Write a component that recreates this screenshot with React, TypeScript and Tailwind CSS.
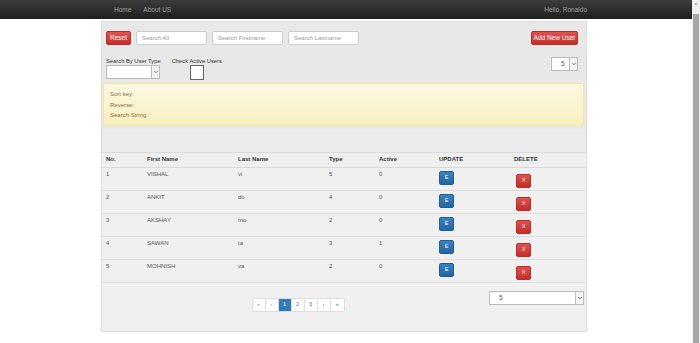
import { ChevronDown } from "lucide-react";

const users = [
  { no: 1, first: "VISHAL", last: "vi", type: 5, active: 0 },
  { no: 2, first: "ANKIT", last: "do", type: 4, active: 0 },
  { no: 3, first: "AKSHAY", last: "mo", type: 2, active: 0 },
  { no: 4, first: "SAWAN", last: "ta", type: 3, active: 1 },
  { no: 5, first: "MOHNISH", last: "va", type: 2, active: 0 },
];

const FakeSelect = ({ value, width }: { value: string; width: string }) => (
  <div className={`flex h-[14px] ${width} border border-[#bbb] bg-white`}>
    <span className="flex-1 pl-[9px] text-[6.5px] leading-[12px] text-[#555]">{value}</span>
    <span className="flex w-[8px] items-center justify-center border-l border-[#bbb] bg-[#f4f4f4]">
      <ChevronDown className="h-[6px] w-[6px] text-[#444]" strokeWidth={3} />
    </span>
  </div>
);

const App = () => {
  return (
    <div className="flex h-[343px] overflow-hidden bg-white font-['Liberation_Sans',Arial,sans-serif] text-[6.5px] text-[#333]">
      <div className="flex-1">
        {/* Navbar */}
        <div className="flex h-[19px] items-center bg-gradient-to-b from-[#3d3d3d] to-[#1f1f1f] pl-[114px] pr-[105px] text-[6.5px] text-[#a0a0a0]">
          <span>Home</span>
          <span className="ml-[12px]">About US</span>
          <span className="ml-auto">Hello, Ronaldo</span>
        </div>

        <div className="ml-[101px] mt-[2px] w-[486px] border border-[#dcdcdc] bg-[#f0f0f0]">
          {/* Search / filter area */}
          <div className="bg-[#e8e8e8] pb-[3px]">
            <div className="flex items-center px-[4px] pt-[9px]">
              <button className="h-[14px] w-[25px] rounded-[2px] border border-[#b92c28] bg-gradient-to-b from-[#e0504c] to-[#c22f2b] text-[6.5px] text-white">
                Reset
              </button>
              {["Search All", "Search Firstname", "Search Lastname"].map((p) => (
                <div
                  key={p}
                  className="ml-[5px] h-[14px] w-[71px] rounded-[2px] border border-[#ccc] bg-white pl-[5px] text-[6px] leading-[12px] text-[#999]"
                >
                  {p}
                </div>
              ))}
              <button className="ml-auto mr-[4px] h-[14px] w-[47px] rounded-[2px] border border-[#b92c28] bg-gradient-to-b from-[#e0504c] to-[#c22f2b] text-[6.5px] text-white">
                Add New User
              </button>
            </div>

            <div className="mt-[12px] flex px-[4px] text-[5.8px]">
              <div className="flex flex-col">
                <span className="h-[8px] leading-[8px]">Search By User Type</span>
                <FakeSelect value="" width="w-[54px]" />
              </div>
              <div className="ml-[11px] flex flex-col">
                <span className="h-[8px] leading-[8px]">Check Active Users</span>
                <div className="ml-[18px] h-[15px] w-[14px] border border-[#666] bg-white" />
              </div>
              <div className="ml-auto mr-[4px]">
                <FakeSelect value="5" width="w-[27px]" />
              </div>
            </div>

            <div className="ml-[1px] mr-[2px] mt-[3px] flex flex-col gap-[2px] border border-[#f5e79e] bg-gradient-to-b from-[#fcf8e3] to-[#f8efc0] px-[6px] pb-[5px] pt-[6px] text-[6px] leading-[8.5px] text-[#8a6d3b]">
              <span>Sort key:</span>
              <span>Reverse:</span>
              <span>Search String :</span>
            </div>
          </div>

          <div className="h-[23px] bg-[#ececec]" />

          {/* Table */}
          <table className="w-[483px] table-fixed border-collapse text-left text-[6px]">
            <thead>
              <tr className="h-[15px] border-b border-t border-[#dadada] bg-[#efefef] leading-[7px]">
                <th className="w-[45px] pl-[4px] font-bold text-[#333]">No.</th>
                <th className="w-[91px] font-bold text-[#333]">First Name</th>
                <th className="w-[91px] font-bold text-[#333]">Last Name</th>
                <th className="w-[50px] font-bold text-[#333]">Type</th>
                <th className="w-[60px] font-bold text-[#333]">Active</th>
                <th className="w-[75px] font-bold text-[#333]">UPDATE</th>
                <th className="font-bold text-[#333]">DELETE</th>
              </tr>
            </thead>
            <tbody>
              {users.map((u) => (
                <tr key={u.no} className="h-[23px] border-b border-[#dedede] align-top leading-[7px] text-[#555]">
                  <td className="pl-[4px] pt-[3px]">{u.no}</td>
                  <td className="pt-[3px]">{u.first}</td>
                  <td className="pt-[3px]">{u.last}</td>
                  <td className="pt-[3px]">{u.type}</td>
                  <td className="pt-[3px]">{u.active}</td>
                  <td className="pt-[3px]">
                    <button className="h-[14px] w-[15px] rounded-[2px] border border-[#1f5f94] bg-gradient-to-b from-[#3a83c0] to-[#26649f] text-[5.5px] text-white">
                      E
                    </button>
                  </td>
                  <td className="pt-[6px]">
                    <button className="ml-[2px] h-[14px] w-[15px] rounded-[2px] border border-[#b92c28] bg-gradient-to-b from-[#e0504c] to-[#c22f2b] text-[5.5px] text-white">
                      X
                    </button>
                  </td>
                </tr>
              ))}
            </tbody>
          </table>

          {/* Pagination + page size */}
          <div className="flex items-start pb-[19px] pt-[8px]">
            <div className="flex flex-1 justify-center pl-[5px] pt-[7px]">
              <div className="flex h-[14px] overflow-hidden rounded-[2px] border border-[#ddd] bg-white text-[5.5px] text-[#337ab7]">
                {["«", "‹", "1", "2", "3", "›", "»"].map((p, i) => (
                  <span
                    key={i}
                    className={`flex w-[13px] items-center justify-center border-r border-[#ddd] last:border-r-0 ${
                      p === "1" ? "bg-[#337ab7] text-white" : ""
                    } ${p === "«" || p === "‹" ? "text-[#999]" : ""}`}
                  >
                    {p}
                  </span>
                ))}
              </div>
            </div>
            <div className="mr-[2px]">
              <FakeSelect value="5" width="w-[95px]" />
            </div>
          </div>
        </div>
      </div>

      {/* Scrollbar */}
      <div className="flex w-[8px] flex-col bg-[#f1f1f1]">
        <div className="flex h-[14px] items-start justify-center pt-[2px] text-[6px] leading-[6px] text-[#555]">
          ^
        </div>
        <div className="mx-[1px] flex-1 bg-[#a8a8a8]" />
      </div>
    </div>
  );
};

export default App;
